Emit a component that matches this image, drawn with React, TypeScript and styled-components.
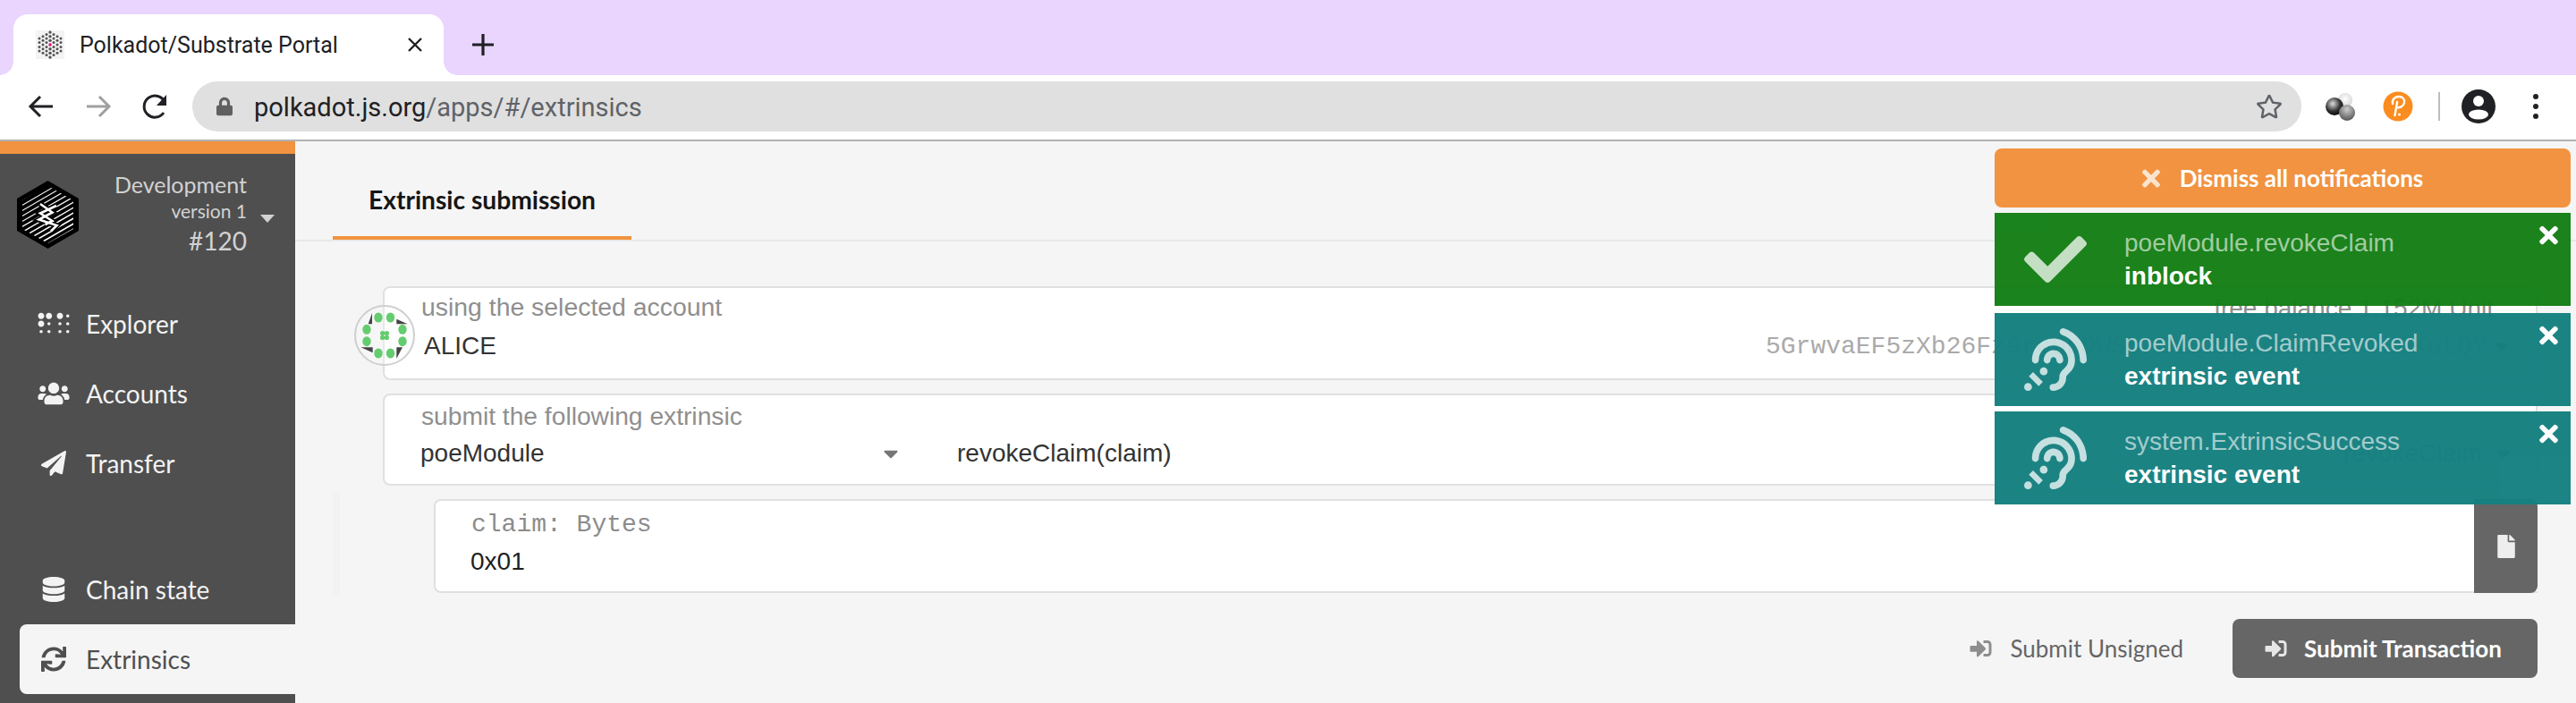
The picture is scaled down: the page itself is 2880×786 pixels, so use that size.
import React from "react";
import styled, { createGlobalStyle } from "styled-components";
import {
  FaBraille, FaUsers, FaPaperPlane, FaDatabase, FaSync, FaTimes, FaCheck,
  FaAssistiveListeningSystems, FaFile, FaSignInAlt, FaLock, FaRegStar, FaCaretDown,
} from "react-icons/fa";

const Global = createGlobalStyle`
  html, body { margin: 0; padding: 0; background: #f5f5f5; }
  #root { width: 2880px; height: 786px; overflow: hidden; }
  * { box-sizing: border-box; }
`;

const Page = styled.div`
  width: 2880px; height: 786px; position: relative; overflow: hidden;
  display: flex; flex-direction: column; font-family: "Liberation Sans", Arial, sans-serif;
`;

/* browser chrome */
const TabStrip = styled.div`
  height: 84px; flex: none; background: #e9d5fe; display: flex; align-items: flex-end;
  padding-left: 15px;
`;
const BrowserTab = styled.div`
  position: relative; width: 481px; height: 68px; background: #fff;
  border-radius: 16px 16px 0 0; display: flex; align-items: center; padding: 0 0 0 25px;
  &::before, &::after {
    content: ""; position: absolute; bottom: 0; width: 15px; height: 15px;
    background: radial-gradient(circle at var(--cx) 0, #e9d5fe 14.5px, #fff 15px);
  }
  &::before { left: -15px; --cx: 0; }
  &::after { right: -15px; --cx: 100%; }
`;
const Favicon = styled.svg`width: 32px; height: 32px; flex: none; margin-right: 17px;`;
const TabTitle = styled.span`
  font: 400 25px Roboto, sans-serif; color: #202124; width: 288px; white-space: nowrap;
`;
const TabClose = styled.svg`width: 18px; height: 18px; margin-left: 78px; flex: none;`;
const NewTab = styled.svg`width: 24px; height: 24px; margin: 0 0 22px 32px; flex: none;`;

const Toolbar = styled.div`
  height: 74px; flex: none; background: #fff; border-bottom: 2px solid #b1b1b1;
  display: flex; align-items: center; padding: 0 0 2px 30px;
`;
const NavBtn = styled.svg`width: 32px; height: 32px; flex: none; margin-right: 32px;`;
const UrlBar = styled.div`
  width: 2358px; height: 56px; background: #e0e0e0; border-radius: 28px; margin-left: -7px;
  display: flex; align-items: center; padding: 0 21px 0 27px;
`;
const LockIcon = styled(FaLock)`width: 18px; height: 22px; color: #606060; flex: none;`;
const UrlText = styled.div`
  font: 400 29px Roboto, sans-serif; color: #202124; margin-left: 24px; padding-top: 2px; flex: 1; white-space: nowrap;
  span { color: #5f6368; }
`;
const StarIcon = styled(FaRegStar)`width: 30px; height: 30px; color: #5f6368;`;
const ExtIcon = styled.svg<{ $ml?: number }>`
  width: 36px; height: 36px; flex: none; margin-left: ${(p) => p.$ml ?? 0}px;
`;
const ExtGroup = styled.div`
  display: flex; align-items: center; margin-left: 26px;
`;
const ExtSep = styled.div`width: 2px; height: 32px; background: #bdbdbd; margin: 0 24px 0 27px;`;
const AvatarIcon = styled.svg`width: 38px; height: 38px; flex: none;`;
const MenuDots = styled.svg`width: 8px; height: 30px; flex: none; margin-left: 41px;`;

/* app */
const AppRow = styled.div`flex: 1; display: flex; min-height: 0;`;
const Sidebar = styled.nav`
  width: 330px; flex: none; background: #4f4f4f; border-top: 14px solid #f19340;
  display: flex; flex-direction: column; font-family: Lato, sans-serif;
`;
const ChainHeader = styled.div`
  height: 151px; flex: none; display: flex; padding: 30px 0 0 19px;
`;
const Logo = styled.svg`width: 69px; height: 76px; flex: none;`;
const ChainInfo = styled.div`
  width: 188px; display: flex; flex-direction: column; align-items: flex-end; color: #d2d2d2; margin-top: -15px;
`;
const ChainName = styled.div`font-size: 25px; line-height: 30px; margin-top: 4px;`;
const ChainVersion = styled.div`font-size: 21px; line-height: 30px;`;
const ChainBlock = styled.div`font-size: 28px; line-height: 36px;`;
const ChainCaret = styled.div`
  width: 0; height: 0; margin: 38px 0 0 15px; border: 8px solid transparent; border-top: 9px solid #d2d2d2; border-bottom: 0;
`;
const NavItem = styled.div<{ $active?: boolean }>`
  height: 78px; flex: none; display: flex; align-items: center; font-size: 28px;
  margin-left: 22px; padding-left: 20px; border-radius: 8px 0 0 8px;
  background: ${(p) => (p.$active ? "#f5f5f5" : "transparent")};
  color: ${(p) => (p.$active ? "#4f4f4f" : "#f3f3f3")};
  svg { width: 36px; height: 28px; flex: none; margin-right: 18px; }
`;
const NavGap = styled.div`height: 63px; flex: none;`;

const Main = styled.main`flex: 1; min-width: 0; background: #f5f5f5; display: flex; flex-direction: column;`;
const TabHeader = styled.div`
  height: 112px; flex: none; border-bottom: 2px solid #e8e8e8; padding-left: 42px; display: flex; align-items: stretch;
`;
const ActiveTab = styled.div`
  width: 334px; height: 110px; border-bottom: 4px solid #f19340; display: flex; align-items: center; justify-content: center;
  padding-top: 24px; font: 700 28.200px Lato, sans-serif; color: #161616;
`;
const Content = styled.div`
  padding: 50px 43px 0 98px; display: flex; flex-direction: column;
`;
const Card = styled.div<{ $h: number; $mt?: number }>`
  position: relative; height: ${(p) => p.$h}px; margin-top: ${(p) => p.$mt ?? 0}px;
  background: #fff; border: 2px solid #e0e0e0; border-radius: 8px; flex: none;
`;
const CardLabel = styled.div<{ $pt: number; $size: number }>`
  height: 40px; font-size: ${(p) => p.$size}px; line-height: 34px; color: #8f8f8f; white-space: nowrap;
  padding: ${(p) => p.$pt}px 0 0 41px;
`;
const CardRow = styled.div`
  display: flex; align-items: center; height: 40px; padding-left: 41px; font-size: 28px; color: #333; margin-top: 5px;
  white-space: nowrap;
`;
const AccountName = styled.div`padding-left: 3px; width: 1503px; flex: none;`;
const Address = styled.div`
  font: 400 28px "Liberation Mono", monospace; color: #aaa; width: 806px; flex: none;
`;
const Caret = styled(FaCaretDown)<{ $ml: number }>`
  width: 20px; height: 26px; color: #767676; flex: none; margin-left: ${(p) => p.$ml}px;
`;
const Balance = styled.div`
  position: absolute; top: 6px; right: 47px; font-size: 28px; line-height: 34px; color: #8f8f8f; white-space: nowrap;
`;
const ModuleName = styled.div`width: 516px; flex: none; margin-left: -1px;`;
const MethodCall = styled.div`width: 1550px; flex: none; margin-left: 64px;`;
const MethodName = styled.div`width: 156px; flex: none; color: #8f8f8f;`;
const Identicon = styled.svg`position: absolute; left: -34px; top: 19px; width: 68px; height: 68px;`;

const ParamRow = styled.div`
  margin-top: 7px; margin-left: -56px; padding: 8px 0 5px 105px; border-left: 8px solid #f2f2f2; display: flex;
`;
const ParamCard = styled.div`
  flex: 1; height: 105px; display: flex; background: #fff; border: 2px solid #e0e0e0; border-right: 0; border-radius: 8px 0 0 8px;
`;
const ParamBody = styled.div`flex: 1; padding: 11px 0 0 40px;`;
const ParamLabel = styled.div`font: 400 28px/32px "Liberation Mono", monospace; color: #8c8c8c;`;
const ParamValue = styled.div`font-size: 28px; line-height: 40px; color: #1f1f1f; margin: 5px 0 0 -1px;`;
const FileButton = styled.div`
  width: 71px; height: 105px; background: #666; border-radius: 0 8px 8px 0; display: flex; align-items: center; justify-content: center;
  margin: -2px 0 0 0;
  svg { width: 20px; height: 26px; color: #eee; }
`;
const Actions = styled.div`
  display: flex; justify-content: flex-end; align-items: center; margin-top: 24px;
  font: 400 26px Lato, sans-serif;
`;
const UnsignedButton = styled.div`
  display: flex; align-items: center; color: #666; margin-right: 55px;
  svg { width: 27px; height: 24px; color: #8e8e8e; margin-right: 19px; }
`;
const SubmitButton = styled.div`
  width: 341px; height: 66px; background: #666; color: #fff; font-weight: 700; border-radius: 8px;
  display: flex; align-items: center; justify-content: center; padding-right: 5px;
  svg { width: 27px; height: 24px; color: #e6e6e6; margin-right: 18px; }
`;

/* notifications */
const Stack = styled.div`
  position: absolute; left: 2230px; top: 166px; width: 644px; display: flex; flex-direction: column;
`;
const Dismiss = styled.div`
  height: 66px; background: #f19340; border-radius: 8px; color: #fff; font: 700 26px Lato, sans-serif;
  display: flex; align-items: center; justify-content: center;
  svg { width: 20px; height: 29px; opacity: .75; margin-right: 22px; }
`;
const Notice = styled.div<{ $bg: string; $mt: number }>`
  position: relative; height: 104px; margin-top: ${(p) => p.$mt}px; background: ${(p) => p.$bg};
  display: flex; align-items: center; opacity: .97; padding-left: 33px; color: #fff;
`;
const NoticeIcon = styled.div`
  width: 70px; height: 70px; flex: none; display: flex; align-items: center; justify-content: center;
  color: rgba(255,255,255,.75);
  svg { width: 70px; height: 70px; }
`;
const NoticeText = styled.div`margin-left: 42px; font-size: 28px; display: flex; flex-direction: column; gap: 5px;`;
const NoticeTitle = styled.div`line-height: 32px; color: rgba(255,255,255,.6);`;
const NoticeStatus = styled.div`line-height: 32px; font-weight: 700;`;
const NoticeClose = styled(FaTimes)`
  position: absolute; right: 14px; top: 10px; width: 21px; height: 30px; color: #fff;
`;

function PolkaFavicon() {
  const cols: [number, number[]][] = [
    [0, [14, 9.3, 4.7]],
    [4, [11.5, 7, 2.5]],
    [8, [9.3, 4.7, 0]],
    [12, [7, 2.5]],
  ];
  const dots: [number, number][] = [];
  cols.forEach(([x, ys]) => {
    ys.forEach((y) => {
      [x, -x].forEach((px) => {
        dots.push([16 + px, 16 + y]);
        if (y !== 0) dots.push([16 + px, 16 - y]);
      });
    });
  });
  return (
    <Favicon viewBox="0 0 32 32">
      <rect width="32" height="32" fill="#f3f3f3" />
      {dots.map(([x, y], i) => <circle key={i} cx={x} cy={y} r="1.5" fill="#555" />)}
      <circle cx="16" cy="16" r="1.7" fill="#e6007a" />
    </Favicon>
  );
}

function ChainLogo() {
  const lines = [];
  for (let i = 0; i < 17; i++) {
    const y = 14 + i * 6;
    lines.push(
      <line key={i} x1="-2" y1={y} x2="72" y2={y - 43} stroke="#fff" strokeWidth={0.8 + i * 0.07} />
    );
  }
  return (
    <Logo viewBox="0 0 69 76">
      <defs>
        <clipPath id="hexClip"><polygon points="34.5,6 63,22 63,54 34.5,70 6,54 6,22" /></clipPath>
      </defs>
      <polygon points="34.5,0 69,20 69,56 34.5,76 0,56 0,20" fill="#000" />
      <g clipPath="url(#hexClip)">{lines}</g>
      <path d="M26 26l13.5 9.5-15 8 20 6.5-6.500 6.500M44 28L26 36.500 39.500 45l-8 4" fill="none" stroke="#000" strokeWidth="6" />
      <path d="M26 26l13.500 9.500-15 8 20 6.500-6.500 6.500M44 28L26 36.500 39.500 45l-8 4" fill="none" stroke="#fff" strokeWidth="2.600" />
    </Logo>
  );
}

function IdenticonMark() {
  const d: [number, number][] = [[-7, -20], [6.5, -20], [-20, -6.7], [20, -6.7], [-20, 6.7], [20, 6.7], [-7, 20], [6.5, 20]];
  return (
    <Identicon viewBox="-34 -34 68 68">
      <circle r="33" fill="rgba(250,250,250,.35)" stroke="#cfcfcf" strokeWidth="2" />
      {d.map(([x, y], i) => <ellipse key={i} cx={x} cy={y} rx="4.7" ry="5.5" fill="#64cc6e" />)}
      <polygon points="-14,-25 -14,-12.7 -18.300,-12.700" fill="#444" />
      <polygon points="13.300,-18.300 25.700,-12.700 13.300,-12.700" fill="#444" />
      <polygon points="-26.700,13.300 -13.300,13.300 -13.300,19.300" fill="#444" />
      <polygon points="13.300,13.300 20,13.300 13.300,26" fill="#444" />
      <circle cx="-2.400" cy="-2.400" r="2.600" fill="#64cc6e" />
      <circle cx="2.400" cy="-2.400" r="2.600" fill="#64cc6e" />
      <circle cx="-2.400" cy="2.400" r="2.600" fill="#64cc6e" />
      <circle cx="2.400" cy="2.400" r="2.600" fill="#64cc6e" />
    </Identicon>
  );
}

export default function App() {
  return (
    <Page>
      <Global />
      <TabStrip>
        <BrowserTab>
          <PolkaFavicon />
          <TabTitle>Polkadot/Substrate Portal</TabTitle>
          <TabClose viewBox="0 0 18 18"><path d="M2 2l14 14M16 2L2 16" stroke="#202124" strokeWidth="2.4" fill="none" /></TabClose>
        </BrowserTab>
        <NewTab viewBox="0 0 24 24"><path d="M12 0v24M0 12h24" stroke="#202124" strokeWidth="3.2" fill="none" /></NewTab>
      </TabStrip>
      <Toolbar>
        <NavBtn viewBox="0 0 32 32"><path d="M29 16H5M15 5L4 16l11 11" stroke="#202124" strokeWidth="3" fill="none" /></NavBtn>
        <NavBtn viewBox="0 0 32 32"><path d="M3 16h24M17 5l11 11-11 11" stroke="#a0a0a0" strokeWidth="3" fill="none" /></NavBtn>
        <NavBtn viewBox="0 0 32 32"><path d="M25 23a12 12 0 1 1 1-12" stroke="#202124" strokeWidth="3" fill="none" /><path d="M28 3v12H17z" fill="#202124" /></NavBtn>
        <UrlBar>
          <LockIcon />
          <UrlText>polkadot.js.org<span>/apps/#/extrinsics</span></UrlText>
          <StarIcon />
        </UrlBar>
        <ExtGroup>
          <ExtIcon viewBox="0 0 36 36">
            <defs>
              <radialGradient id="bw" cx=".4" cy=".35" r=".7"><stop offset="0" stopColor="#ddd" /><stop offset=".6" stopColor="#333" /><stop offset="1" stopColor="#000" /></radialGradient>
              <radialGradient id="lt" cx=".5" cy=".4" r=".7"><stop offset="0" stopColor="#fff" /><stop offset="1" stopColor="#ccc" /></radialGradient>
              <radialGradient id="gr" cx=".5" cy=".3" r=".8"><stop offset="0" stopColor="#ccc" /><stop offset="1" stopColor="#444" /></radialGradient>
            </defs>
            <circle cx="23" cy="11" r="8" fill="url(#lt)" />
            <circle cx="11" cy="18" r="10" fill="url(#bw)" />
            <circle cx="25" cy="25" r="9" fill="url(#gr)" />
          </ExtIcon>
          <ExtIcon viewBox="0 0 36 36" $ml={28}>
            <circle cx="18" cy="18" r="16.5" fill="#fb8c1f" />
            <path d="M14.500 28l2.600-15M12 15c-1-5 3-8 7-8s7 3 6 7-5 6-9 5" fill="none" stroke="#fff" strokeWidth="2.400" strokeLinecap="round" />
            <circle cx="19.500" cy="27" r="1.500" fill="#fff" />
          </ExtIcon>
        </ExtGroup>
        <ExtSep />
        <AvatarIcon viewBox="0 0 38 38">
          <circle cx="19" cy="19" r="19" fill="#202124" />
          <circle cx="19" cy="13" r="6" fill="#fff" />
          <ellipse cx="19" cy="28" rx="11" ry="5.500" fill="#fff" />
        </AvatarIcon>
        <MenuDots viewBox="0 0 8 30">
          <circle cx="4" cy="4" r="3" fill="#202124" /><circle cx="4" cy="15" r="3" fill="#202124" /><circle cx="4" cy="26" r="3" fill="#202124" />
        </MenuDots>
      </Toolbar>
      <AppRow>
        <Sidebar>
          <ChainHeader>
            <ChainLogo />
            <ChainInfo>
              <ChainName>Development</ChainName>
              <ChainVersion>version 1</ChainVersion>
              <ChainBlock>#120</ChainBlock>
            </ChainInfo>
            <ChainCaret />
          </ChainHeader>
          <NavItem><FaBraille />Explorer</NavItem>
          <NavItem><FaUsers />Accounts</NavItem>
          <NavItem><FaPaperPlane />Transfer</NavItem>
          <NavGap />
          <NavItem><FaDatabase />Chain state</NavItem>
          <NavItem $active><FaSync />Extrinsics</NavItem>
        </Sidebar>
        <Main>
          <TabHeader><ActiveTab>Extrinsic submission</ActiveTab></TabHeader>
          <Content>
            <Card $h={105}>
              <IdenticonMark />
              <CardLabel $pt={4} $size={28.4}>using the selected account</CardLabel>
              <Balance>free balance 1.152M Unit</Balance>
              <CardRow>
                <AccountName>ALICE</AccountName>
                <Address>5GrwvaEF5zXb26Fz9rcQpDWS57CtERHpNehXCPcNoHGKutQY</Address>
                <Caret $ml={7} />
              </CardRow>
            </Card>
            <Card $h={103} $mt={15}>
              <CardLabel $pt={6} $size={28.2}>submit the following extrinsic</CardLabel>
              <CardRow>
                <ModuleName>poeModule</ModuleName>
                <Caret $ml={0} />
                <MethodCall>revokeClaim(claim)</MethodCall>
                <MethodName>revokeClaim</MethodName>
                <Caret $ml={13} />
              </CardRow>
            </Card>
            <ParamRow>
              <ParamCard>
                <ParamBody>
                  <ParamLabel>claim: Bytes</ParamLabel>
                  <ParamValue>0x01</ParamValue>
                </ParamBody>
                <FileButton><FaFile /></FileButton>
              </ParamCard>
            </ParamRow>
            <Actions>
              <UnsignedButton><FaSignInAlt />Submit Unsigned</UnsignedButton>
              <SubmitButton><FaSignInAlt />Submit Transaction</SubmitButton>
            </Actions>
          </Content>
        </Main>
      </AppRow>
      <Stack>
        <Dismiss><FaTimes />Dismiss all notifications</Dismiss>
        <Notice $bg="#147f16" $mt={6}>
          <NoticeIcon><FaCheck /></NoticeIcon>
          <NoticeText><NoticeTitle>poeModule.revokeClaim</NoticeTitle><NoticeStatus>inblock</NoticeStatus></NoticeText>
          <NoticeClose />
        </Notice>
        <Notice $bg="#158080" $mt={8}>
          <NoticeIcon><FaAssistiveListeningSystems /></NoticeIcon>
          <NoticeText><NoticeTitle>poeModule.ClaimRevoked</NoticeTitle><NoticeStatus>extrinsic event</NoticeStatus></NoticeText>
          <NoticeClose />
        </Notice>
        <Notice $bg="#158080" $mt={6}>
          <NoticeIcon><FaAssistiveListeningSystems /></NoticeIcon>
          <NoticeText><NoticeTitle>system.ExtrinsicSuccess</NoticeTitle><NoticeStatus>extrinsic event</NoticeStatus></NoticeText>
          <NoticeClose />
        </Notice>
      </Stack>
    </Page>
  );
}
